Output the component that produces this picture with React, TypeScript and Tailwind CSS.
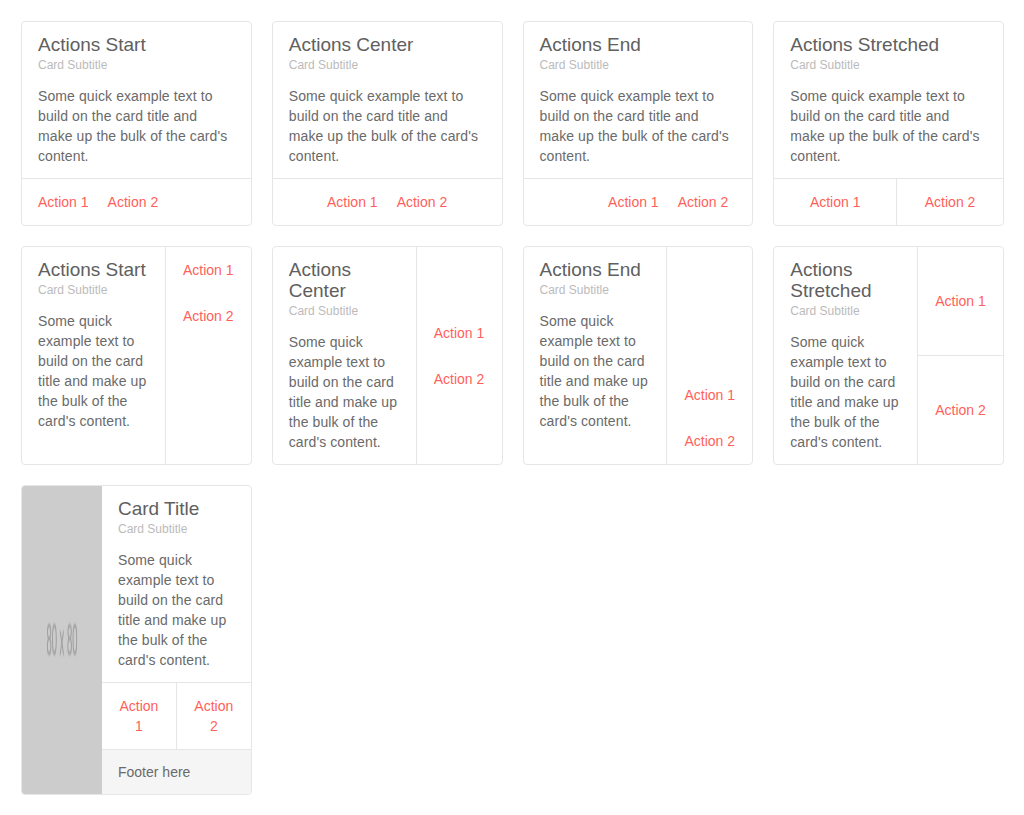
const BODY = "Some quick example text to build on the card title and make up the bulk of the card's content."

type Align = 'start' | 'center' | 'end' | 'stretch'

function Action({ label, grow }: { label: string; grow?: boolean }) {
	return (
		<button
			className={
				'px-2 py-[13px] text-sm leading-5 text-[#ff5f5a] text-center ' + (grow ? 'flex-1' : '')
			}
		>
			{label}
		</button>
	)
}

function CardBody({ title, className = '' }: { title: string; className?: string }) {
	return (
		<div className={'px-4 pt-3 pb-3 ' + className}>
			<h3 className="text-[19px] leading-[21px] text-[#606060]">{title}</h3>
			<div className="mt-0.5 text-xs leading-4 text-[#bbbbbb]">Card Subtitle</div>
			<p className="mt-[13px] text-sm leading-5 tracking-[0.1px] text-[#6a6a6a]">{BODY}</p>
		</div>
	)
}

function VerticalCard({ title, align }: { title: string; align: Align }) {
	return (
		<div className="flex flex-col rounded border border-[#e6e6e6] bg-white">
			<CardBody title={title} className="flex-1" />
			{align === 'stretch' ? (
				<div className="flex border-t border-[#e6e6e6]">
					<Action label="Action 1" grow />
					<div className="flex flex-1 border-l border-[#e6e6e6]">
						<Action label="Action 2" grow />
					</div>
				</div>
			) : (
				<div
					className={
						'flex gap-[3px] border-t border-[#e6e6e6] px-2 ' +
						(align === 'start' ? 'justify-start' : align === 'center' ? 'justify-center' : 'justify-end pr-4')
					}
				>
					<Action label="Action 1" />
					<Action label="Action 2" />
				</div>
			)}
		</div>
	)
}

function HorizontalCard({ title, align }: { title: string; align: Align }) {
	return (
		<div className="flex rounded border border-[#e6e6e6] bg-white">
			<CardBody title={title} className="flex-1" />
			{align === 'stretch' ? (
				<div className="flex w-[86px] shrink-0 flex-col border-l border-[#e6e6e6]">
					<div className="flex flex-1 items-center justify-center">
						<Action label="Action 1" />
					</div>
					<div className="flex flex-1 items-center justify-center border-t border-[#e6e6e6]">
						<Action label="Action 2" />
					</div>
				</div>
			) : (
				<div
					className={
						'flex w-[86px] shrink-0 flex-col items-center border-l border-[#e6e6e6] ' +
						(align === 'start' ? 'justify-start' : align === 'center' ? 'justify-center' : 'justify-end')
					}
				>
					<Action label="Action 1" />
					<Action label="Action 2" />
				</div>
			)}
		</div>
	)
}

function MediaCard() {
	return (
		<div className="flex overflow-hidden rounded border border-[#e6e6e6] bg-white">
			<div className="flex w-20 shrink-0 items-center justify-center bg-[#cccccc]">
				<span className="scale-y-[4.6] text-[9.5px] leading-none text-[#999] blur-[0.3px]">80 x 80</span>
			</div>
			<div className="flex flex-1 flex-col">
				<CardBody title="Card Title" className="flex-1" />
				<div className="flex border-t border-[#e6e6e6]">
					<button className="flex-1 px-4 py-[13px] text-sm leading-5 text-[#ff5f5a]">Action 1</button>
					<button className="flex-1 border-l border-[#e6e6e6] px-4 py-[13px] text-sm leading-5 text-[#ff5f5a]">
						Action 2
					</button>
				</div>
				<div className="border-t border-[#e6e6e6] bg-[#f5f5f5] px-4 py-3 text-sm leading-5 text-[#6a6a6a]">
					Footer here
				</div>
			</div>
		</div>
	)
}

export default function App() {
	return (
		<div className="min-h-screen bg-white pl-[21px] pr-5 pt-[21px] pb-5 font-['Liberation_Sans',Arial,sans-serif]">
			<div className="grid grid-cols-4 gap-5">
				<VerticalCard title="Actions Start" align="start" />
				<VerticalCard title="Actions Center" align="center" />
				<VerticalCard title="Actions End" align="end" />
				<VerticalCard title="Actions Stretched" align="stretch" />

				<HorizontalCard title="Actions Start" align="start" />
				<HorizontalCard title="Actions Center" align="center" />
				<HorizontalCard title="Actions End" align="end" />
				<HorizontalCard title="Actions Stretched" align="stretch" />

				<MediaCard />
			</div>
		</div>
	)
}
